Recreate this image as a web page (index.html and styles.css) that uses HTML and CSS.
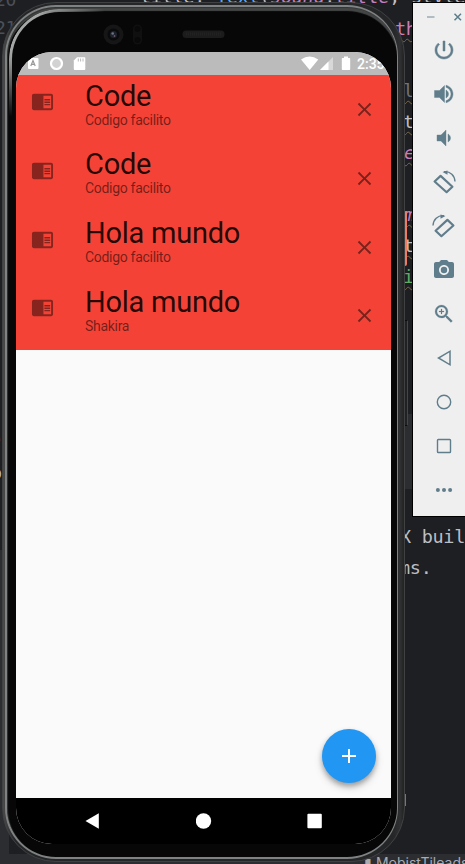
FILE: index.html
```html
<!DOCTYPE html>
<html lang="es">
<head>
<meta charset="utf-8">
<title>Emulator</title>
<link rel="stylesheet" href="styles.css">
</head>
<body>
<svg width="0" height="0" class="defs">
  <symbol id="reader" viewBox="0 0 24 24"><path d="M21 4H3c-1.100 0-2 .9-2 2v13c0 1.100.9 2 2 2h18c1.100 0 2-.9 2-2V6c0-1.100-.9-2-2-2zm0 15h-8V6h8v13zM14 9.500h6V11h-6zm0 2.500h6v1.500h-6zm0 2.500h6V16h-6z"/></symbol>
  <symbol id="close" viewBox="0 0 24 24"><path d="M19 6.410 17.590 5 12 10.590 6.410 5 5 6.410 10.590 12 5 17.590 6.410 19 12 13.410 17.590 19 19 17.590 13.410 12z"/></symbol>
</svg>
<div class="desktop">
  <div class="band band-tool"></div>
  <div class="band band-status"></div>
  <div class="band band-left"></div>
  <span class="code gutter g20">20</span>
  <span class="code gutter g21">21</span>
  <span class="code c-top">title: <b>Text</b>(<i>sound</i>.<i>title</i>, style:</span>
  <span class="code c1 pink wavy">th</span>
  <span class="code c2 wavy grey">l</span>
  <span class="code c3 wavy">t</span>
  <span class="code c4 wavy pink"><em>e</em></span>
  <span class="code c5 wavy pink"><em>m</em></span>
  <span class="code c6 wavy">t</span>
  <span class="code c7 wavy green">i</span>
  <span class="code c8">X build</span>
  <span class="code c9">ms.</span>
  <span class="code s1">.</span>
  <span class="code s2">o</span>
  <span class="code s3">]</span>
  <span class="statusline">▮ MobistTileads</span>
  <div class="orange"></div>
  <div class="power-key"></div>
  <div class="low-key"></div>

  <div class="phone">
    <div class="bezel">
      <svg class="sensors" width="375" height="40" viewBox="0 0 375 40">
        <circle cx="97.500" cy="22.500" r="10" fill="#161617"/>
        <circle cx="97.500" cy="22.500" r="6" fill="#090a0c"/>
        <circle cx="97.500" cy="22.500" r="3.500" fill="#1d222c"/>
        <circle cx="96.700" cy="21.500" r="1.300" fill="#6b7285"/>
        <circle cx="98.500" cy="24" r=".8" fill="#8d6d86"/>
        <rect x="117" y="12.500" width="9" height="20" rx="4.500" fill="#101011"/>
        <circle cx="121.500" cy="17" r="3" fill="#09090a"/>
        <circle cx="121.500" cy="28" r="3" fill="#09090a"/>
        <rect x="166.500" y="18.500" width="42" height="7.500" rx="3.500" fill="#1c1c1c"/>
        <path d="M170 22h35" stroke="#222" stroke-width="3" stroke-dasharray="1 1"/>
      </svg>
      <div class="screen">
        <div class="statusbar">
          <svg width="375" height="23" viewBox="0 0 375 23">
            <rect x="12" y="6" width="10.500" height="11" rx="1" fill="#fff"/>
            <path d="M14.800 14 17 8.500l2.200 5.500M15.500 12.300h3" fill="none" stroke="#999" stroke-width="1.200"/>
            <circle cx="40.500" cy="11.500" r="5.500" fill="#d2d2d2" stroke="#fff" stroke-width="2.200"/>
            <path fill="#fff" d="M61 5.300h7.500q.8 0 .8.800v10.800q0 1-1 1H58.600q-.8 0-.8-1V8.500z"/>
            <path d="M62.300 6.500v3M64.600 6.500v3M67 6.500v3" stroke="#bbb" stroke-width="1"/>
            <path fill="#fff" d="M285 7.500q8.500-6 17.300 0L293.700 18z"/>
            <path fill="#d8d8d8" d="M304 18 317 5v13z"/>
            <path fill="#fff" d="M304 18 312.500 9.500V18z"/>
            <path fill="#fff" d="M328 4.500h4v1.500h1.500q.7 0 .7.700v10.600q0 .7-.7.700h-7q-.7 0-.7-.7V6.700q0-.7.700-.7H328z"/>
          </svg>
          <span class="clock">2:35</span>
        </div>
        <div class="list">
          <div class="tile"><svg class="lead"><use href="#reader"/></svg><div class="copy"><div class="title">Code</div><div class="sub">Codigo facilito</div></div><svg class="trail"><use href="#close"/></svg></div>
          <div class="tile"><svg class="lead"><use href="#reader"/></svg><div class="copy"><div class="title">Code</div><div class="sub">Codigo facilito</div></div><svg class="trail"><use href="#close"/></svg></div>
          <div class="tile"><svg class="lead"><use href="#reader"/></svg><div class="copy"><div class="title">Hola mundo</div><div class="sub">Codigo facilito</div></div><svg class="trail"><use href="#close"/></svg></div>
          <div class="tile"><svg class="lead"><use href="#reader"/></svg><div class="copy"><div class="title">Hola mundo</div><div class="sub">Shakira</div></div><svg class="trail"><use href="#close"/></svg></div>
        </div>
        <div class="space"></div>
        <div class="navbar">
          <svg width="16" height="16" viewBox="0 0 16 16"><path fill="#fff" d="M1.500 8 14.800.3v15.400z"/></svg>
          <svg width="16" height="16" viewBox="0 0 16 16"><circle cx="7.500" cy="8" r="7.700" fill="#fff"/></svg>
          <svg width="16" height="16" viewBox="0 0 16 16"><rect x=".4" y=".8" width="14.400" height="14.400" rx="1" fill="#fff"/></svg>
        </div>
        <div class="fab"><svg width="14" height="14" viewBox="0 0 14 14"><path d="M7 0v14M0 7h14" stroke="#fff" stroke-width="2"/></svg></div>
      </div>
    </div>
  </div>

  <div class="toolbar">
    <div class="winbtns">
      <svg width="52" height="28" viewBox="0 0 52 28"><path d="M14 14h7.500" stroke="#9fb0b8" stroke-width="1.600"/><path d="m41.500 10.700 6.500 6.500m0-6.500-6.500 6.500" stroke="#5d7c8a" stroke-width="1.500"/></svg>
    </div>
    <svg viewBox="0 0 24 24"><path d="M13 3h-2v10h2V3zm4.830 2.170-1.420 1.420C17.990 7.860 19 9.810 19 12c0 3.870-3.130 7-7 7s-7-3.130-7-7c0-2.190 1.010-4.140 2.580-5.420L6.170 5.170C4.230 6.820 3 9.260 3 12c0 4.970 4.030 9 9 9s9-4.030 9-9c0-2.740-1.230-5.180-3.170-6.830z" stroke="#607d8b" stroke-width=".5"/></svg>
    <svg viewBox="0 0 24 24"><path d="M2.500 8.500v7h5l5 5v-17l-5 5zm14 3.500c0-1.770-1.020-3.290-2.500-4.030v8.050c1.480-.73 2.500-2.250 2.500-4.020zM14 3.230v2.060c2.890.86 5 3.540 5 6.710s-2.110 5.850-5 6.710v2.060c4.010-.91 7-4.490 7-8.770s-2.990-7.860-7-8.770z" stroke="#607d8b" stroke-width=".4"/></svg>
    <svg viewBox="0 0 24 24"><path d="M18.500 12c0-1.770-1.020-3.290-2.500-4.030v8.050c1.480-.73 2.500-2.250 2.500-4.020zM5 9v6h4l5 5V4L9 9H5z" stroke="#607d8b" stroke-width=".4"/></svg>
    <svg viewBox="0 0 24 24"><g fill="none" stroke="#607d8b"><path d="M2.600 11.500 8.600 5.900 20.400 16.700 14.600 22.200z" stroke-width="2.200" stroke-linejoin="round"/><path d="M12 1.700C18.500 1.200 22.700 5.500 23 11.500" stroke-width="1.400"/></g><path d="m10.500 2 5-1.500v4.300z"/></svg>
    <svg viewBox="0 0 24 24"><g fill="none" stroke="#607d8b"><path d="M21.400 11.500 15.400 5.900 3.600 16.700 9.400 22.200z" stroke-width="2.200" stroke-linejoin="round"/><path d="M12 1.700C5.500 1.200 1.300 5.500 1 11.500" stroke-width="1.400"/></g><path d="m13.500 2-5-1.500v4.300z"/></svg>
    <svg viewBox="0 0 24 24"><circle cx="12" cy="12" r="3.200"/><path d="M9 2 7.170 4H4c-1.100 0-2 .9-2 2v12c0 1.100.9 2 2 2h16c1.100 0 2-.9 2-2V6c0-1.100-.9-2-2-2h-3.170L15 2H9zm3 15c-2.760 0-5-2.240-5-5s2.240-5 5-5 5 2.240 5 5-2.240 5-5 5z"/></svg>
    <svg viewBox="0 0 24 24"><path d="M15.500 14h-.79l-.28-.27A6.471 6.471 0 0 0 16 9.500 6.500 6.500 0 1 0 9.500 16c1.610 0 3.090-.59 4.230-1.570l.27.28v.79l5 4.990L20.490 19l-4.990-5zm-6 0C7.010 14 5 11.990 5 9.500S7.010 5 9.500 5 14 7.010 14 9.500 11.990 14 9.500 14zM12 10h-2v2H9v-2H7V9h2V7h1v2h2v1z" stroke="#607d8b" stroke-width=".2"/></svg>
    <svg viewBox="0 0 24 24"><path d="M18 5.200v13.600L6.500 12z" fill="none" stroke="#607d8b" stroke-width="1.500"/></svg>
    <svg viewBox="0 0 24 24"><circle cx="12" cy="12" r="6.700" fill="none" stroke="#607d8b" stroke-width="1.400"/></svg>
    <svg viewBox="0 0 24 24"><rect x="5.500" y="5.500" width="13" height="13" rx=".8" fill="none" stroke="#607d8b" stroke-width="1.400"/></svg>
    <svg viewBox="0 0 24 24"><circle cx="5.900" cy="12" r="2"/><circle cx="12" cy="12" r="2"/><circle cx="18.100" cy="12" r="2"/></svg>
  </div>
</div>
</body>
</html>
```
FILE: styles.css
```css
* { box-sizing: border-box; }
body { margin: 0; font-family: Roboto, "Liberation Sans", sans-serif; }
svg { display: block; }
.defs { position: absolute; }

.desktop {
  position: relative;
  width: 465px;
  height: 864px;
  overflow: hidden;
  background: #1e1f22;
}
.band { position: absolute; background: #2b2d30; }
.band-tool { left: 400px; top: 414px; width: 14px; height: 75px; }
.band-status { left: 0; top: 854px; width: 465px; height: 10px; }
.band-left { left: 0; top: 550px; width: 9px; height: 314px; }

.code {
  position: absolute;
  font: 18.500px/24px "DejaVu Sans Mono", "Liberation Mono", monospace;
  letter-spacing: -0.300px;
  color: #bcbec4;
  white-space: pre;
}
.gutter { color: #4b5059; font-size: 18px; left: -5px; }
.g20 { top: -12px; }
.g21 { top: 16px; }
.c-top { left: 140px; top: -15px; }
.c-top b { color: #57aaf7; font-weight: 400; }
.c-top i { color: #c77dbb; }
.pink { color: #c77dbb; }
.grey { color: #6f737a; }
.green { color: #5fad65; }
.wavy { text-decoration: underline wavy #7c6843 1px; text-underline-offset: 3px; }
.c1 { left: 395px; top: 17px; }
.c2 { left: 403px; top: 79px; }
.c3 { left: 403px; top: 110px; }
.c4 { left: 404px; top: 141px; }
.c5 { left: 404px; top: 203px; }
.c6 { left: 403px; top: 234px; }
.c7 { left: 403px; top: 265px; }
.c8 { left: 400px; top: 525px; }
.c9 { left: 399px; top: 556px; }
.s1 { left: -7px; top: 423px; }
.s2 { left: -9px; top: 461px; }
.s3 { left: 397px; top: 788px; }
.statusline {
  position: absolute;
  left: 364px;
  top: 857px;
  font: 14px/12px Inter, sans-serif;
  color: #a8abb2;
  white-space: nowrap;
}
.orange { position: absolute; left: 403px; top: 211px; width: 4px; height: 55px; border-radius: 2px; background: #ef7b62; }
.power-key { position: absolute; left: 403px; top: 320px; width: 5px; height: 106px; background: #202122; border: 1px solid #0c0c0c; border-right-color: #454648; }
.low-key { position: absolute; left: 405px; top: 794px; width: 1px; height: 12px; background: #777; }

.phone {
  position: absolute;
  left: 2px;
  top: 2px;
  width: 403px;
  height: 860px;
  padding: 2px 6px 2px 2px;
  border-radius: 54px;
  background: linear-gradient(90deg, #4a4a4a 0, #252628 12px, #252628 390px, #303133 397px, #222 401px);
  border: 1px solid #404142;
}
.bezel {
  position: relative;
  display: flex;
  flex-direction: column;
  height: 100%;
  border: 2px solid #7f8282;
  border-right-width: 1px;
  border-radius: 51px;
  padding: 5px 5px 0 9px;
  background: #070708;
  box-shadow: inset 1px 1px 1px #333, inset 0 5px 1px -1px #454747;
}
/* Light catching the top-left corner of the metal frame */
.bezel::before {
  content: "";
  position: absolute;
  left: 2px;
  top: 2px;
  width: 160px;
  height: 130px;
  border: solid #a5a7a7;
  border-width: 3px 0 0 3px;
  border-top-left-radius: 50px;
  filter: blur(.4px);
  -webkit-mask-image: radial-gradient(circle at 14px 24px, #000 24px, transparent 85px);
  mask-image: radial-gradient(circle at 14px 24px, #000 24px, transparent 85px);
}
.sensors { flex: none; }
.screen {
  position: relative;
  display: flex;
  flex-direction: column;
  width: 375px;
  height: 792px;
  border-radius: 36px;
  overflow: hidden;
  background: #fafafa;
  flex: none;
}
.statusbar { position: relative; flex: none; height: 23px; background: #bbb; }
.clock {
  position: absolute;
  left: 341px;
  top: 4px;
  font-size: 14px;
  line-height: 17px;
  font-weight: 500;
  color: #fff;
}
.list { flex: none; height: 275px; background: #f44336; }
.tile { display: flex; height: 68.750px; padding: 0 15px; }
.lead { width: 23px; height: 23px; margin-top: 15px; fill: rgba(0, 0, 0, .45); }
.copy { flex: 1; margin-left: 31px; padding-top: 3.500px; }
.title { font-size: 29px; line-height: 35px; letter-spacing: -.25px; color: rgba(0, 0, 0, .87); }
.sub { font-size: 14px; line-height: 16px; letter-spacing: -.3px; margin-top: -2px; color: rgba(0, 0, 0, .54); }
.trail { width: 23px; height: 23px; margin-top: 23px; fill: rgba(0, 0, 0, .5); }
.space { flex: 1; }
.navbar {
  flex: none;
  display: flex;
  justify-content: space-between;
  padding: 15px 68px 0 68px;
  height: 46px;
  background: #000;
}
.fab {
  position: absolute;
  left: 306px;
  top: 677px;
  width: 54px;
  height: 54px;
  border-radius: 50%;
  display: grid;
  place-items: center;
  background: #2196f3;
  box-shadow: 0 3px 5px rgba(0, 0, 0, .28), 0 5px 9px rgba(0, 0, 0, .15);
}
.toolbar {
  position: absolute;
  left: 412px;
  top: 2px;
  width: 60px;
  height: 515px;
  display: flex;
  flex-direction: column;
  gap: 20px;
  background: #efefef;
  border: 1px solid #000;
}
.toolbar > svg { flex: none; width: 24px; height: 24px; margin-left: 19px; fill: #607d8b; overflow: visible; }
.winbtns { height: 15px; }
```
